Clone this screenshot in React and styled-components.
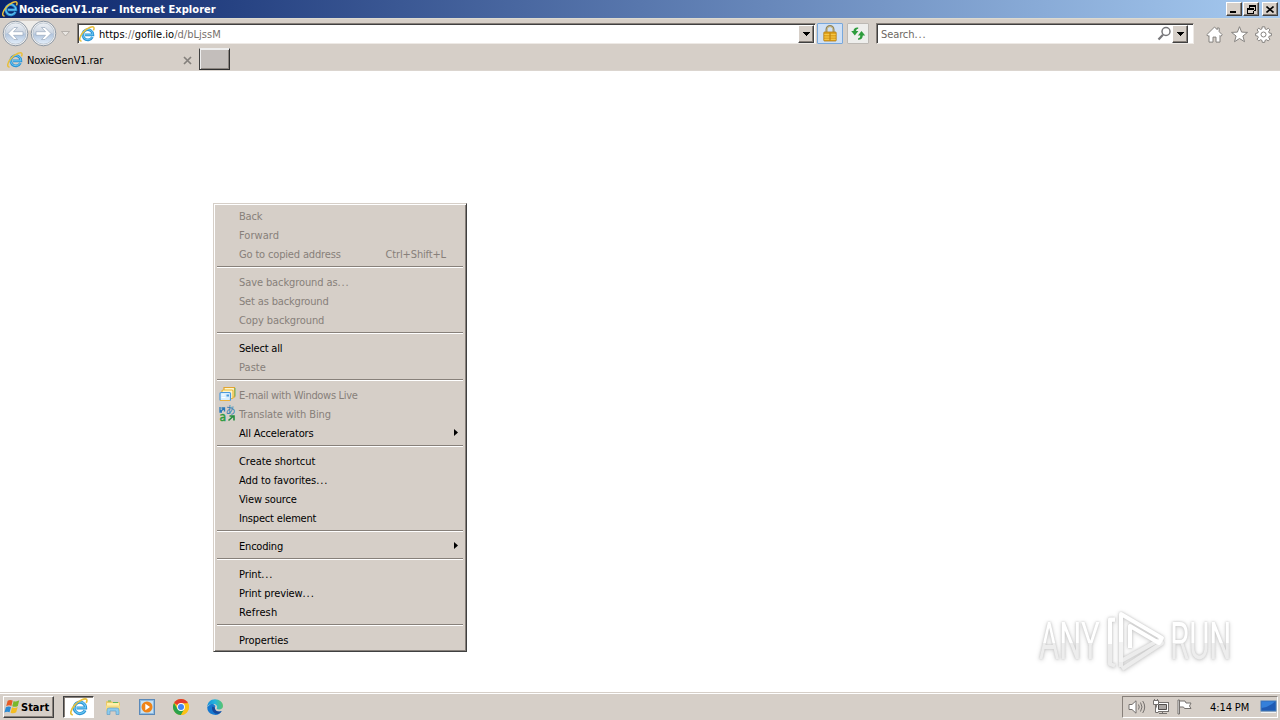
import React from "react";
import styled, { createGlobalStyle, css } from "styled-components";

const Global = createGlobalStyle`
  * { box-sizing: border-box; }
  html, body { margin: 0; padding: 0; overflow: hidden; }
  body { font: 11px/13px "DejaVu Sans Condensed", "DejaVu Sans", sans-serif; font-stretch: condensed; color: #000; }
  svg { display: block; flex: none; }
`;

const face = "#d6cfc8";

const Screen = styled.div`
  width: 1280px; height: 720px; display: flex; flex-direction: column; background: #fff; position: relative; overflow: hidden;
`;
const Label = styled.span`
  white-space: nowrap; letter-spacing: ${(p) => p.$ls ?? -0.1}px; color: ${(p) => p.$color || "inherit"};
`;
const Dots = styled.span` letter-spacing: ${(p) => p.$ls ?? 0.9}px; `;
const raised = css`
  border: 1px solid; border-color: #fff #404040 #404040 #fff; box-shadow: inset -1px -1px #87807a; background: ${face};
`;

/* Title bar */
const TitleBar = styled.header`
  height: 18px; flex: none; display: flex; align-items: center; padding: 0 2px 0 2px; gap: 1px;
  background: linear-gradient(90deg, #0a246a, #a6caf0); color: #fff; font-weight: bold;
`;
const TitleText = styled(Label)` flex: 1; `;
const WinButton = styled.div`
  ${raised} width: 16px; height: 14px; display: flex; align-items: center; justify-content: center;
  margin-left: ${(p) => p.$gap || 0}px;
`;

/* Navigation */
const NavBar = styled.div`
  height: 30px; flex: none; display: flex; align-items: center; background: ${face}; border-top: 1px solid #dcdad0; padding: 0 0 0 2px;
`;
const NavPair = styled.div` width: 56px; height: 30px; display: flex; align-items: center; `;
const Chevron = styled.div` width: 19px; display: flex; justify-content: center; padding-right: 4px; `;
const Field = styled.div`
  height: 21px; display: flex; align-items: center; background: #fff; border: 1px solid;
  border-color: #87807a #eeeae6 #eeeae6 #87807a; box-shadow: inset 1px 1px #404040; padding: 1px;
  width: ${(p) => p.$w}px; margin-left: ${(p) => p.$gap || 0}px; padding-left: ${(p) => p.$pad}px;
`;
const FieldText = styled(Label)` flex: 1; margin-left: ${(p) => p.$gap || 0}px; padding-top: 1px; `;
const Strong = styled.span` color: #000; `;
const DropButton = styled.div`
  ${raised} width: 16px; height: 18px; display: flex; align-items: center; justify-content: center; margin-right: ${(p) => p.$right || 0}px;
`;
const IconButton = styled.div`
  width: ${(p) => p.$w}px; height: 21px; border: 1px solid ${(p) => (p.$active ? "#78a8dc" : "#bdb9b4")};
  background: ${(p) => (p.$active ? "#cfe0f5" : "#eeeeec")}; margin-left: ${(p) => p.$gap}px; display: flex; align-items: center; justify-content: center; border-radius: 1px;
`;
const Tools = styled.div` display: flex; gap: 7.5px; margin: 2px 0 0 12px; `;

/* Tabs */
const TabStrip = styled.div` height: 23px; flex: none; display: flex; background: ${face}; border-bottom: 1px solid #dbd5cf; `;
const Tab = styled.div`
  width: 199px; display: flex; align-items: center; padding: 2px 7px 0 7px; gap: 4px;
`;
const TabTitle = styled(Label)` flex: 1; `;
const NewTab = styled.div`
  width: 31px; height: 22px; background: #c3bebb; border: 1px solid #303030; border-left-color: #404040; border-top-color: #eee; box-shadow: inset 1px 1px #eee, inset -1px -1px #8b8580;
`;
const Page = styled.main` flex: 1; background: #fff; `;

/* Context menu floats over the page */
const Menu = styled.div`
  position: absolute; left: 213px; top: 203px; width: 254px; height: 449px; background: ${face};
  border: 1px solid; border-color: #d6cfc8 #404040 #404040 #d6cfc8;
  box-shadow: inset 1px 1px #fff, inset -1px -1px #87807a; padding: 2px;
`;
const MenuRow = styled.div`
  height: 19px; display: flex; align-items: center; color: ${(p) => (p.$off ? "#87807a" : "#000")}; padding: 1px 6px 0 3px;
`;
const MenuIcon = styled.div` width: 20px; height: 18px; display: flex; align-items: center; margin-top: -2px; `;
const MenuLabel = styled(Label)` flex: 1; `;
const Shortcut = styled(Label)` margin-right: 12px; `;
const SubMark = styled.div` padding-bottom: 2px; `;
const Divider = styled.div`
  height: 2px; margin: 3px 1px 4px; background: linear-gradient(#87807a 50%, #fff 50%);
`;

/* Watermark over the page */
const Watermark = styled.div`
  position: absolute; left: 1039px; top: 606px; width: 194px; height: 70px; display: flex; align-items: center; gap: 5px;
  filter: drop-shadow(0 0 1px #c4c4c4) drop-shadow(0 1px 2px #d8d8d8);
`;
const Brand = styled.div`
  width: 63px; font: 400 51px/70px Roboto, sans-serif; white-space: nowrap; padding-top: 2px;
`;
const BrandInk = styled.span`
  display: inline-block; transform: scaleX(${(p) => p.$sx}); transform-origin: 0 50%; color: transparent;
  background: linear-gradient(#fff 51%, #ededed 51%); background-clip: text; -webkit-background-clip: text;
`;

/* Taskbar */
const TaskBar = styled.footer`
  height: 28px; flex: none; background: ${face}; border-top: 1px solid #d6cfc8; box-shadow: inset 0 1px #fff; display: flex; align-items: center; padding: 1px 2px 0 3px;
`;
const Start = styled.div`
  ${raised} width: 51px; height: 22px; display: flex; align-items: center; gap: 0; font-weight: bold;
`;
const TaskButton = styled.div`
  width: 31px; height: 22px; margin-left: ${(p) => p.$gap || 3}px; display: flex; align-items: center; justify-content: center;
  ${(p) => p.$active && css`background: #fff; border: 1px solid; border-color: #404040 #fff #fff #404040; box-shadow: inset 1px 1px #87807a;`}
`;
const Spacer = styled.div` flex: 1; `;
const Tray = styled.div`
  width: 156px; height: 22px; border: 1px solid; border-color: #87807a #fff #fff #87807a; display: flex; align-items: center; gap: 6px; padding-left: 5px;
`;
const Clock = styled(Label)` margin: 0 5px 0 10px; `;

function IE({ size = 16 }) {
  return (
    <svg width={size} height={size} viewBox="0 0 16 16" fill="none">
      <path d="M13.400 11A5.100 5.100 0 1 1 13.900 8.800H5.800" stroke="#2a93d5" strokeWidth="2.700" />
      <path d="M13.300 11A5.100 5.100 0 1 1 13.900 8.800H5.800" stroke="#6cc8f2" strokeWidth="1" />
      <path d="M2.600 14.900C-.400 15.200.2 10.700 4.200 6.300 8.300 1.800 13.700-.3 14.800 1.400c.5.700.2 1.800-.4 3" stroke="#e8bf3c" strokeWidth="1.500" />
    </svg>
  );
}
const Down = ({ w = 7 }) => (
  <svg width={w} height="4" viewBox="0 0 7 4" shapeRendering="crispEdges"><path d="M0 0h7L3.5 4z" /></svg>
);
function NavArrows() {
  return (
    <svg width="56" height="30" viewBox="0 0 56 30">
      <defs>
        <linearGradient id="orb" x2="0" y2="1"><stop stopColor="#eef1f5" /><stop offset=".45" stopColor="#cdd6e2" /><stop offset=".55" stopColor="#b3c6de" /><stop offset="1" stopColor="#e4effb" /></linearGradient>
      </defs>
      <path d="M14 2h28v7q-14 5-28 0z" fill="#eeece9" />
      {[13.5, 41.5].map((x, i) => (
        <g key={x} transform={`translate(${x} 14.5)${i ? " scale(-1 1)" : ""}`}>
          <circle r="12.300" fill="#f5f5f5" stroke="#7f8b9a" strokeWidth=".9" />
          <circle r="10.600" fill="url(#orb)" stroke="#b4bfcc" strokeWidth=".8" />
          <path d="M-7.500 0 -1.500-6H2L-2-1.800H7.500V1.800H-2L2 6H-1.500z" fill="#fff" stroke="#99a9bd" strokeWidth=".7" />
        </g>
      ))}
    </svg>
  );
}
const Lock = () => (
  <svg width="14" height="17" viewBox="0 0 14 17">
    <path d="M3.500 8V4.500a3.500 3.500 0 0 1 7 0V8" fill="none" stroke="#8e8258" strokeWidth="2" />
    <path d="M4 8V4.500a3 3 0 0 1 6 0V8" fill="none" stroke="#e6d9a3" strokeWidth=".7" />
    <rect x=".8" y="7" width="12.400" height="9" rx=".7" fill="#e2a51d" stroke="#b37c12" strokeWidth=".8" />
    <path d="M1.300 9.500h11.400M1.300 12h11.400M1.300 14.400h11.400" stroke="#f7cf58" strokeWidth=".8" />
    <path d="M7 7.500v8" stroke="#bd8214" strokeWidth="1.200" />
  </svg>
);
const Reload = () => (
  <svg width="16" height="15" viewBox="0 0 16 15" fill="#2d9c3c">
    <path d="M8.200 1.500C5.200 1.200 3.600 2.500 3.500 5H1.200L4.800 9.600 8.400 5H6.100c0-1.300.6-2 2.100-2.300z" />
    <path d="M8 13.800c3.200 0 4.800-1.500 4.800-4.300h2.400L11.500 5 7.900 9.500h2.400c0 1.500-.6 2.600-2.300 3z" />
  </svg>
);
const Magnifier = () => (
  <svg width="15" height="15" viewBox="0 0 15 15" fill="none" stroke="#77777a">
    <circle cx="9" cy="5.500" r="4" strokeWidth="1.500" /><path d="M6 8.700 1.500 13.500" strokeWidth="2.200" />
  </svg>
);
const toolProps = { width: 17, height: 17, viewBox: "0 0 17 17", fill: "#fff", stroke: "#85827f", strokeWidth: "1" };
const Home = () => (
  <svg {...toolProps}><path d="M8.500 1 .7 8.800l1.500 1.500.8-.8v6.600h4v-5h3v5h4V9.500l.8.8 1.500-1.500-3.100-3.100V2h-2v1.700z" /></svg>
);
const Star = () => (
  <svg {...toolProps}><path d="m8.500.7 2.100 5.400 5.900.3-4.600 3.600 1.600 5.700-5-3.200-5 3.200L5.100 10 .5 6.400l5.900-.3z" /></svg>
);
const Gear = () => (
  <svg {...toolProps}>
    <path d="M7.200.8h2.600l.3 2.100 1.400.6 1.800-1.300 1.600 1.700-1.200 1.700.5 1.400 2.200.4v2.300l-2.200.4-.5 1.400 1.200 1.700-1.700 1.700-1.700-1.200-1.400.6-.4 2.100H7.300l-.4-2.100-1.400-.6-1.700 1.200-1.700-1.700 1.200-1.700-.6-1.400-2.100-.4V7.400L2.700 7l.6-1.400-1.200-1.700 1.600-1.700 1.800 1.300 1.400-.6z" />
    <circle cx="8.500" cy="8.500" r="2.500" />
  </svg>
);
const Arrow = () => <svg width="4" height="7" viewBox="0 0 4 7"><path d="M0 0 4 3.500 0 7z" /></svg>;

const Mail = () => (
  <svg width="17" height="17" viewBox="0 0 17 17">
    <path d="M5 4V1.500h10.500V11H13" fill="#fff6c9" stroke="#e3a430" strokeWidth="1.200" />
    <path d="M16 2v8.500" stroke="#62b96c" />
    <rect x="3" y="4" width="11" height="8.500" rx="1" fill="#fff6c9" stroke="#e8b638" strokeWidth="1.200" />
    <rect x="1" y="6.500" width="10.500" height="8" rx="1" fill="#d8efff" stroke="#4c99dc" strokeWidth="1.200" />
    <path d="M1 14.500h10" stroke="#eeb13a" /><path d="M2.500 9h3M2.500 11.500h4" stroke="#fff" /><rect x="7.500" y="8.500" width="2.500" height="2" fill="#4b9adb" />
  </svg>
);
const GlyphSvg = styled.svg` overflow: visible; `;
const Translate = () => (
  <GlyphSvg width="17" height="17" viewBox="0 0 17 17" fill="none">
    <path d="M1 2v5h2M1.500 6.500 5.500 3M5.500 6.500V3H2.500" stroke="#2878ba" strokeWidth="1.300" />
    <text x="6.500" y="8.500" fontSize="10" fontFamily="Noto Sans CJK JP, sans-serif" fill="#2f7db5">あ</text>
    <text x=".5" y="16" fontSize="12" fontFamily="DejaVu Sans, sans-serif" fill="#2a9a3c" stroke="#2a9a3c" strokeWidth=".4">a</text>
    <path d="M9.500 15.500 14.500 11M10.500 11h4.500v4.500" stroke="#238d3e" strokeWidth="1.600" />
  </GlyphSvg>
);
const Flag = () => (
  <svg width="17" height="18" viewBox="0 0 15 16">
    <path d="M3.200 2.500q2-1.500 4.500-.3L6.500 7Q4.200 5.800 1.900 7.300z" fill="#e75b24" />
    <path d="M8.500 2.600q2.500 1.100 5-.5l-1.300 4.900q-2.500 1.600-4.900.3z" fill="#79b82b" />
    <path d="M1.600 8.200Q4.200 6.800 6.200 8L4.900 12.600Q2.700 11.500.3 12.900z" fill="#2c8bd4" />
    <path d="M7.100 8.300q2.500 1.200 5-.4l-1.300 4.800q-2.500 1.600-5 .4z" fill="#f4bd22" />
  </svg>
);
const Explorer = () => (
  <svg width="16" height="16" viewBox="0 0 16 16">
    <path d="M1 3q0-1 1-1h4l1.500 1H14l1 1v7H1z" fill="#e9c966" />
    <path d="M2 4h12v4H2z" fill="#fff0aa" /><path d="M3 2h3M8 3.500h5" stroke="#61b65b" />
    <path d="M1 6.500h14V12H1z" fill="#f6dc82" />
    <path d="M2 15.500V11q0-2 2-2h8q2 0 2 2v4.500h-3V12H5v3.500z" fill="#8ccbed" stroke="#5799c4" strokeWidth=".6" />
  </svg>
);
const Media = () => (
  <svg width="16" height="16" viewBox="0 0 16 16">
    <rect x=".5" y=".5" width="15" height="15" fill="#8fbbe1" stroke="#5a89b9" /><rect x="2" y="2" width="12" height="12" fill="#c6e1f4" />
    <circle cx="8" cy="8" r="5.500" fill="#ef8418" /><path d="M6.300 4.800 11 8l-4.700 3.200z" fill="#fff" />
  </svg>
);
const Chrome = () => (
  <svg width="16" height="16" viewBox="0 0 16 16">
    <circle cx="8" cy="8" r="8" fill="#fbc116" />
    <path d="M8 8 1.070 4A8 8 0 0 1 14.930 4z" fill="#e33b2e" />
    <path d="M1.070 4A8 8 0 0 0 8 16l3.500-6L8 8 4.500 10z" fill="#2ba24c" />
    <path d="M8 4.300h7A8 8 0 0 1 8 16l3.400-6z" fill="#fbc116" />
    <circle cx="8" cy="8" r="3.900" fill="#fff" /><circle cx="8" cy="8" r="3" fill="#4285f4" />
  </svg>
);
const Edge = () => (
  <svg width="16" height="16" viewBox="0 0 16 16">
    <defs><linearGradient id="edge" x2="1"><stop stopColor="#168fda" /><stop offset=".5" stopColor="#25b5dc" /><stop offset="1" stopColor="#5ac46a" /></linearGradient></defs>
    <path d="M.2 8a7.800 7.800 0 0 0 14.500 4c-3 1.500-5.700.5-6.700-2-.7-1.800.5-3 .5-3L5 4z" fill="#1678d0" />
    <path d="M5.300 7.500c-1.300 4 2 7.500 5.500 7.500 1.700-.5 3-1.500 3.900-3-4 1.600-7.200-.5-6.900-3.500z" fill="#17489a" />
    <path d="M.2 8C.4 3.500 3.500.2 8 .2c4.500 0 8 3 8 6.700 0 2-1.500 3.500-4 3.500-2 0-2.700-.7-2-1.600.7-1.700-.6-3.900-4-3.900C3.200 4.900.8 6 .2 8z" fill="url(#edge)" />
  </svg>
);
const trayProps = { width: 18, height: 16, viewBox: "0 0 18 16", fill: "none", stroke: "#75716e", strokeWidth: 1 };
const Speaker = () => (
  <svg {...trayProps}><path d="M1 5.500h3L8 1.800v12.400l-4-3.700H1z" fill="#fff" /><path d="M10.500 5.500q1.500 2.500 0 5M12.500 3.500q3 4.500 0 9M14.700 2q4 6 0 12" /></svg>
);
const Network = () => (
  <svg {...trayProps}><rect x="4.500" y="3.500" width="12" height="9" fill="#fff" /><path d="M6.500 5.500h8v5h-8z" fill="#aaa6a3" stroke="#514e4c" /><path d="M7 14.500h8M10.500 12v2" /><path d="M1.500 1.500h5v4h-5zM2.500 0v2M5.500 0v2M3.500 6v7.500h3" fill="#fff" /></svg>
);
const Action = () => (
  <svg {...trayProps}><path d="M2 1h1.500v14H2z" fill="#fff" /><path d="M3.500 2H9l1 2h5l-1.500 3L15 9.500H8.500L7.500 8h-4z" fill="#fff" /></svg>
);
const Desktop = () => (
  <svg width="17" height="16" viewBox="0 0 17 16"><rect x="1" y="2" width="15" height="10" fill="#1f5bb4" stroke="#477fb9" /><path d="M1.500 9Q9 8 15 2.500H1.500z" fill="#3480da" /><path d="M1 13.500h15" stroke="#f0f3f4" /></svg>
);
const PlayMark = () => (
  <svg width="58" height="62" viewBox="0 0 58 62" fill="none" strokeLinejoin="round">
    <path d="M8 10H3v44l5 2M14 57v-6l38-21 3 3-40 26" stroke="#ececec" strokeWidth="4" />
    <path d="M14 46V4l41 24-3 5-29-17v22" stroke="#fff" strokeWidth="4" />
    <path d="M8 9.500H3V34" stroke="#fff" strokeWidth="4" />
    <path d="M14 32v20" stroke="#f3f3f3" strokeWidth="4" />
  </svg>
);

const items = [
  { text: "Back", off: true, ls: -0.2 },
  { text: "Forward", off: true, ls: 0.05 },
  { text: "Go to copied address", off: true, ls: -0.16, shortcut: "Ctrl+Shift+L" },
  null,
  { text: "Save background as", dots: true, off: true },
  { text: "Set as background", off: true, ls: -0.16 },
  { text: "Copy background", off: true },
  null,
  { text: "Select all", ls: -0.2 },
  { text: "Paste", off: true, ls: 0.05 },
  null,
  { text: "E-mail with Windows Live", off: true, ls: -0.3, icon: <Mail /> },
  { text: "Translate with Bing", off: true, ls: -0.12, icon: <Translate /> },
  { text: "All Accelerators", ls: -0.16, sub: true },
  null,
  { text: "Create shortcut", ls: -0.05 },
  { text: "Add to favorites", dots: true },
  { text: "View source", ls: -0.16 },
  { text: "Inspect element", ls: -0.18 },
  null,
  { text: "Encoding", ls: -0.2, sub: true },
  null,
  { text: "Print", dots: true },
  { text: "Print preview", dots: true },
  { text: "Refresh", ls: 0.15 },
  null,
  { text: "Properties", ls: -0.05 },
];

export default function App() {
  return (
    <Screen>
      <Global />
      <TitleBar>
        <IE />
        <TitleText $ls={0.05}>NoxieGenV1.rar - Internet Explorer</TitleText>
        <WinButton><svg width="8" height="8"><path d="M0 6h6v2H0z" /></svg></WinButton>
        <WinButton><svg width="9" height="9" shapeRendering="crispEdges"><path d="M2 0h7v6H6V5h2V2H3v1H2zM0 3h7v6H0zm1 2v3h5V5z" fillRule="evenodd" /></svg></WinButton>
        <WinButton $gap={2}><svg width="8" height="7"><path d="m.5.5 7 6m0-6-7 6" stroke="#000" strokeWidth="1.600" /></svg></WinButton>
      </TitleBar>
      <NavBar>
        <NavPair><NavArrows /></NavPair>
        <Chevron><svg width="9" height="6"><path d="M.5.500h8l-4 4.500z" fill="#e9e6e2" stroke="#aaa5a0" strokeWidth=".8" /></svg></Chevron>
        <Field $w={739} $pad={1}>
          <IE />
          <FieldText $gap={4} $ls={0.02} $color="#77716c"><Strong>https</Strong>://<Strong>gofile.io</Strong>/d/bLjssM</FieldText>
          <DropButton><Down /></DropButton>
        </Field>
        <IconButton $active $w={26} $gap={1}><Lock /></IconButton>
        <IconButton $w={22} $gap={4}><Reload /></IconButton>
        <Field $w={318} $gap={7} $pad={4}>
          <FieldText $color="#6d6762">Search<Dots>...</Dots></FieldText>
          <Magnifier /><DropButton $right={4}><Down /></DropButton>
        </Field>
        <Tools><Home /><Star /><Gear /></Tools>
      </NavBar>
      <TabStrip>
        <Tab><IE /><TabTitle $ls={-0.15}>NoxieGenV1.rar</TabTitle><svg width="9" height="9"><path d="m1 1 7 7m0-7-7 7" stroke="#84807c" strokeWidth="1.700" /></svg></Tab>
        <NewTab />
      </TabStrip>
      <Page />
      <Menu>
        {items.map((item, i) => item === null ? <Divider key={i} /> : (
          <MenuRow key={i} $off={item.off}>
            <MenuIcon>{item.icon}</MenuIcon>
            <MenuLabel $ls={item.ls}>{item.text}{item.dots && <Dots>...</Dots>}</MenuLabel>
            {item.shortcut && <Shortcut $ls={-0.15}>{item.shortcut}</Shortcut>}
            {item.sub && <SubMark><Arrow /></SubMark>}
          </MenuRow>
        ))}
      </Menu>
      <Watermark>
        <Brand><BrandInk $sx={0.61}>ANY</BrandInk></Brand>
        <PlayMark />
        <Brand><BrandInk $sx={0.61}>RUN</BrandInk></Brand>
      </Watermark>
      <TaskBar>
        <Start><Flag /><Label $ls={0}>Start</Label></Start>
        <TaskButton $active $gap={9}><IE size={18} /></TaskButton>
        <TaskButton><Explorer /></TaskButton>
        <TaskButton><Media /></TaskButton>
        <TaskButton><Chrome /></TaskButton>
        <TaskButton><Edge /></TaskButton>
        <Spacer />
        <Tray><Speaker /><Network /><Action /><Clock>4:14 PM</Clock><Desktop /></Tray>
      </TaskBar>
    </Screen>
  );
}
